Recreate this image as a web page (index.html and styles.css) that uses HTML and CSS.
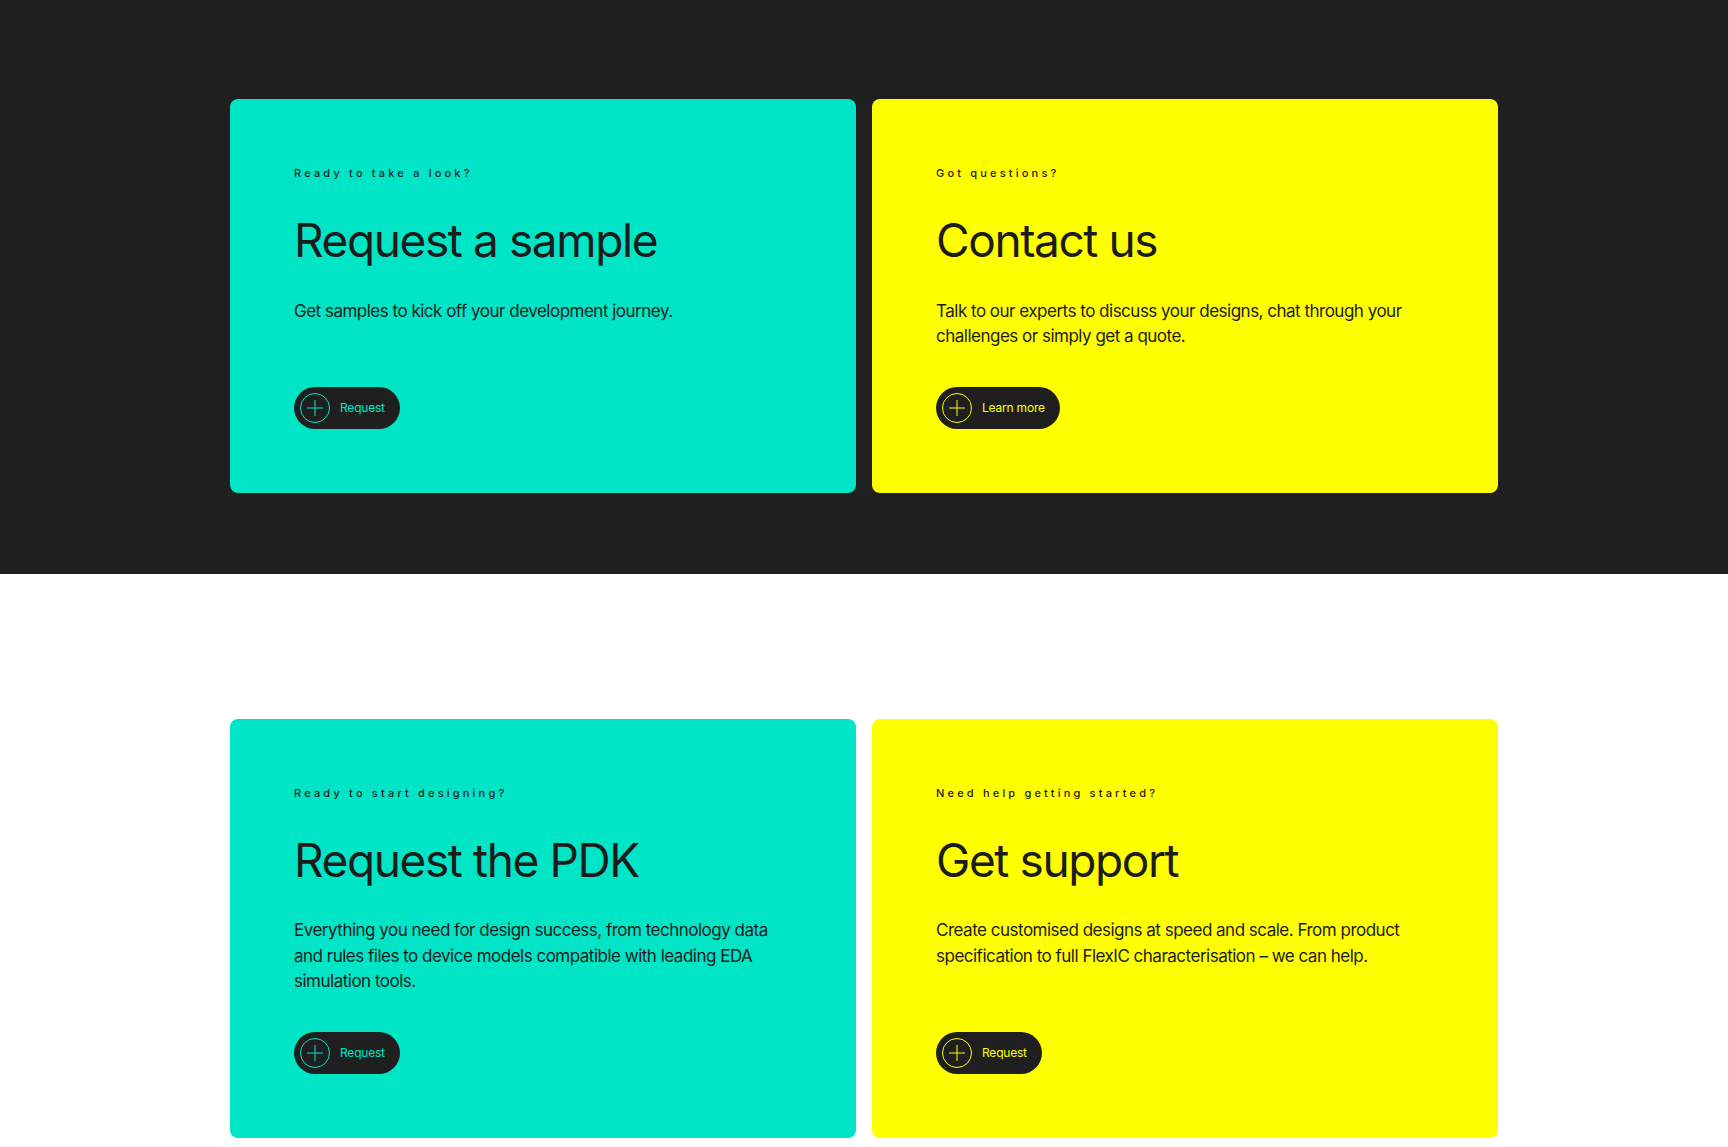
FILE: index.html
```html
<!DOCTYPE html>
<html lang="en">
<head>
<meta charset="utf-8">
<title>Cards</title>
<link rel="stylesheet" href="styles.css">
</head>
<body>
<section class="band band-dark">
  <div class="cards">
    <article class="card card-cyan">
      <p class="eyebrow">Ready to take a look?</p>
      <h2 class="title">Request a sample</h2>
      <p class="text">Get samples to kick off your development journey.</p>
      <a class="btn" href="#"><span class="btn-icon"><svg viewBox="0 0 16 16" width="16" height="16"><path d="M8 0v16M0 8h16" stroke="currentColor" stroke-width="1" fill="none"/></svg></span><span class="btn-label">Request</span></a>
    </article>
    <article class="card card-yellow">
      <p class="eyebrow">Got questions?</p>
      <h2 class="title">Contact us</h2>
      <p class="text">Talk to our experts to discuss your designs, chat through your challenges or simply get a quote.</p>
      <a class="btn" href="#"><span class="btn-icon"><svg viewBox="0 0 16 16" width="16" height="16"><path d="M8 0v16M0 8h16" stroke="currentColor" stroke-width="1" fill="none"/></svg></span><span class="btn-label">Learn more</span></a>
    </article>
  </div>
</section>
<section class="band band-light">
  <div class="cards">
    <article class="card card-cyan">
      <p class="eyebrow">Ready to start designing?</p>
      <h2 class="title">Request the PDK</h2>
      <p class="text">Everything you need for design success, from technology data and rules files to device models compatible with leading EDA simulation tools.</p>
      <a class="btn" href="#"><span class="btn-icon"><svg viewBox="0 0 16 16" width="16" height="16"><path d="M8 0v16M0 8h16" stroke="currentColor" stroke-width="1" fill="none"/></svg></span><span class="btn-label">Request</span></a>
    </article>
    <article class="card card-yellow">
      <p class="eyebrow">Need help getting started?</p>
      <h2 class="title">Get support</h2>
      <p class="text">Create customised designs at speed and scale. From product specification to full FlexIC characterisation – we can help.</p>
      <a class="btn" href="#"><span class="btn-icon"><svg viewBox="0 0 16 16" width="16" height="16"><path d="M8 0v16M0 8h16" stroke="currentColor" stroke-width="1" fill="none"/></svg></span><span class="btn-label">Request</span></a>
    </article>
  </div>
</section>
</body>
</html>
```

FILE: styles.css
```css
* { box-sizing: border-box; }
html, body { margin: 0; padding: 0; }
body {
  font-family: "Inter", "Liberation Sans", sans-serif;
  color: #1c1c1c;
  background: #ffffff;
}
.band-dark {
  background: #1f1f1f;
  padding: 99px 0 81px;
}
.band-light {
  background: #ffffff;
  padding: 145px 0 9px;
}
.cards {
  width: 1268px;
  margin: 0 auto;
  display: grid;
  grid-template-columns: 1fr 1fr;
  gap: 16px;
}
.card {
  border-radius: 8px;
  padding: 66px 64px 64px 64px;
  display: flex;
  flex-direction: column;
  align-items: flex-start;
}
.card-cyan { background: #00e5c6; --accent: #00e5c6; }
.card-yellow { background: #ffff00; --accent: #ffff00; }
.eyebrow {
  margin: 0;
  font-size: 11px;
  line-height: 16px;
  letter-spacing: 0.29em;
  font-weight: 500;
  color: #1c1c1c;
}
.title {
  margin: 34px 0 0;
  font-size: 46px;
  line-height: 50.6px;
  font-weight: 400;
  letter-spacing: -1.4px;
}
.text {
  margin: 33px 0 37px;
  font-size: 17px;
  line-height: 25.5px;
  letter-spacing: -0.5px;
  max-width: 480px;
}
.btn {
  margin-top: auto;
  display: inline-flex;
  align-items: center;
  gap: 10px;
  height: 42px;
  padding: 0 15px 0 6px;
  border-radius: 21px;
  background: #1f1f1f;
  color: var(--accent);
  text-decoration: none;
}
.btn-icon {
  width: 30px;
  height: 30px;
  border-radius: 50%;
  border: 1px solid var(--accent);
  display: flex;
  align-items: center;
  justify-content: center;
}
.btn-label {
  font-size: 12px;
  letter-spacing: -0.2px;
}
```
